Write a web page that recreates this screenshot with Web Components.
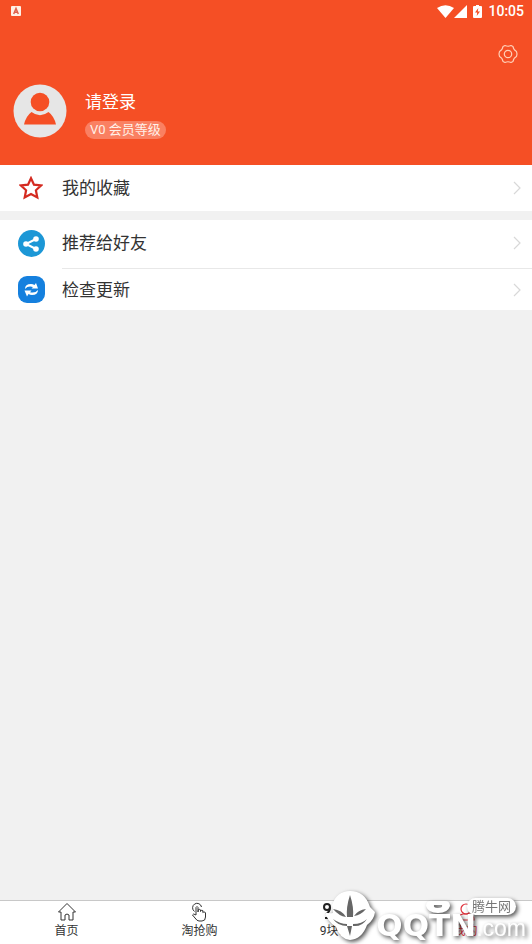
<!DOCTYPE html>
<html lang="zh-CN">
<head>
<meta charset="utf-8">
<meta name="viewport" content="width=device-width, initial-scale=1">
<title>我的</title>
<style>
  html, body { margin: 0; height: 100%; }
  body { font-family: Roboto, "Noto Sans CJK SC", sans-serif; color: #333; background: #f1f1f1; }
</style>
</head>
<body>
<mine-page></mine-page>

<script>

class StatusBar extends HTMLElement {
    constructor() {
        super();
        this.attachShadow({mode:"open"});
        this.shadowRoot.innerHTML = `<style>
            :host { display: flex; align-items: center; height: 22px; padding: 0 8px 0 11px; color: #fff; }
            svg { display: block; }
            .right { margin-left: auto; display: flex; align-items: center; }
            .battery { margin: 0 6px 0 6px; }
            time { font-size: 14px; line-height: 22px; font-weight: 500; }
        </style>
        <svg width="10" height="10" viewBox="0 0 10 10"><rect width="10" height="10" rx="1" fill="#fff0e6"/><path d="M2.7 8 5 2.5 7.3 8M3.5 6.3h3" fill="none" stroke="#e0604a" stroke-width="1.5"/></svg>
        <div class="right">
            <svg width="17" height="13" viewBox="0 0 17 13"><path d="M0 3Q8.500-2.500 17 3L8.500 13z" fill="#fff"/></svg>
            <svg width="13" height="13" viewBox="0 0 13 13"><path d="M13 0v13H0z" fill="#fff"/></svg>
            <svg class="battery" width="9" height="13" viewBox="0 0 9 13"><path d="M3 0h3v1h2q1 0 1 1v10q0 1-1 1H1q-1 0-1-1V2q0-1 1-1h2z" fill="#fff"/><path d="M5.300 3 2 7.500h2.200L3.700 11 7 6.500H4.800z" fill="#f54f25"/></svg>
            <time>10:05</time>
        </div>`;
    }
}
customElements.define("status-bar", StatusBar);


class ProfileHeader extends HTMLElement {
    constructor() {
        super();
        this.attachShadow({mode:"open"});
        this.shadowRoot.innerHTML = `<style>
            :host { display: block; background: #f54f25; color: #fff; padding-bottom: 26px; }
            .tools { display: flex; justify-content: flex-end; padding: 22px 14px 0; }
            button { border: 0; padding: 0; background: none; color: inherit; font: inherit; text-align: left; cursor: pointer; }
            svg { display: block; }
            .user { display: flex; align-items: center; gap: 18px; margin: 19px 0 0 13px; }
            .info { display: flex; flex-direction: column; align-items: flex-start; gap: 8px; padding-top: 8px; }
            .login { font-size: 17px; line-height: 22px; }
            .level { font-size: 13px; line-height: 18px; padding: 0 5px; border-radius: 9px; background: #fa8062; color: #fff0e8; }
        </style>
        <status-bar></status-bar>
        <div class="tools">
            <button aria-label="设置">
                <svg width="20" height="20" viewBox="0 0 20 20" fill="none" stroke="#ffd0b8" stroke-width="1.2" stroke-linejoin="round"><path d="M7 1.500Q10 3 13 1.500L15 2.500Q15.500 6 18.500 7.500L19 10L18.500 12.500Q15.500 14 15 17.500L13 18.500Q10 17 7 18.500L5 17.500Q4.500 14 1.500 12.500L1 10L1.500 7.500Q4.500 6 5 2.500z"/><circle cx="10" cy="10" r="3.700"/></svg>
            </button>
        </div>
        <div class="user">
            <svg width="54" height="54" viewBox="0 0 54 54"><circle cx="27" cy="27" r="26.500" fill="#e6e6e6"/><circle cx="27" cy="18" r="9.300" fill="#f54f25"/><path d="M11 40.500Q13 32 18.500 28Q27 34.500 35.500 28Q41 32 43 40.500z" fill="#f54f25"/></svg>
            <div class="info">
                <button class="login">请登录</button>
                <span class="level">V0 会员等级</span>
            </div>
        </div>`;
    }
}
customElements.define("profile-header", ProfileHeader);


// white block of rows
class MenuGroup extends HTMLElement {
    constructor() {
        super();
        this.attachShadow({mode:"open"});
        this.shadowRoot.innerHTML = `<style>
            :host { display: block; background: #fff; margin-bottom: 9px; }
            ::slotted(menu-row:not(:first-child)) { --line: #e8e8e8; --row: 41px; --space: 3px; }
        </style>
        <slot></slot>`;
    }
}
customElements.define("menu-group", MenuGroup);


class MenuRow extends HTMLElement {
    constructor() {
        super();
        this.attachShadow({mode:"open"});
        this.shadowRoot.innerHTML = `<style>
            :host { display: block; padding-top: var(--space, 0); }
            a { display: grid; grid-template-columns: 62px 1fr; align-items: center; color: inherit; text-decoration: none; }
            .icon { display: grid; place-items: center; }
            .text { display: flex; align-items: center; justify-content: space-between; min-height: var(--row, 46px); padding-right: 11px; border-top: 1px solid var(--line, transparent); margin-top: -1px; font-size: 17px; line-height: 24px; }
        </style>
        <a href="#">
            <span class="icon"><slot name="icon"></slot></span>
            <span class="text"><slot></slot>
                <svg width="8" height="14" viewBox="0 0 8 14"><path d="M1 1l6 6-6 6" fill="none" stroke="#d8d8d8" stroke-width="1.2"/></svg>
            </span>
        </a>`;
    }
}
customElements.define("menu-row", MenuRow);


class TabItem extends HTMLElement {
    constructor() {
        super();
        this.attachShadow({mode:"open"});
        this.shadowRoot.innerHTML = `<style>
            :host { display: block; flex: 1; }
            :host([active]) { color: #e0303a; }
            a { display: flex; flex-direction: column; align-items: center; color: inherit; text-decoration: none; font-size: 12px; line-height: 16px; padding: 1px 0 5px; gap: 1px; }
        </style>
        <a href="#"><slot name="icon"></slot><span><slot></slot></span></a>`;
    }
}
customElements.define("tab-item", TabItem);


// floating logo over the tab bar
class SiteMark extends HTMLElement {
    constructor() {
        super();
        this.attachShadow({mode:"open"});
        this.shadowRoot.innerHTML = `<style>
            :host { position: absolute; right: 6px; bottom: 0; display: flex; align-items: flex-end; color: #fff; pointer-events: none; filter: drop-shadow(2px 2px 2px #000a); }
            svg { display: block; }
            .words { display: flex; align-items: baseline; line-height: 32px; }
            .name { font-family: "DejaVu Sans", sans-serif; font-weight: bold; font-size: 31px; }
            .com { font-family: "Liberation Sans", sans-serif; font-size: 23px; }
            .horns { position: absolute; right: 76px; bottom: 31px; }
            .cn { position: absolute; right: 10px; bottom: 29px; padding: 0 5px; border-radius: 9px; background: #fff; color: #777; font-size: 13px; line-height: 17px; white-space: nowrap; }
        </style>
        <svg width="52" height="56" viewBox="0 0 52 56">
            <path d="M8 17Q13 3 26 3Q41 3 46 19L51 24Q50 32 43 37Q38 51 26 52Q16 51 12 39Q3 33 1 24Q5 26 9 25z" fill="#fff"/>
            <path d="M26 7Q22 19 23 29H29Q30 19 26 7zM9 21Q15 28 22 29Q18 22 9 21zM42 21Q34 22 30 28Q37 27 42 21zM9 31Q16 36 23 36V38Q14 38 9 31zM29 36Q38 36 43 31Q38 39 29 38zM23 38H28L26 48z" fill="#666"/>
        </svg>
        <span class="words"><span class="name">QQTN</span><span class="com">.com</span></span>
        <svg class="horns" width="24" height="12" viewBox="0 0 24 12"><path d="M5 0H19Q24 0 24 5Q22 12 12 12Q2 12 0 5Q0 0 5 0zM8 4Q7 7 12 7Q17 7 16 4z" fill="#fff" fill-rule="evenodd"/></svg>
        <span class="cn">腾牛网</span>`;
    }
}
customElements.define("site-mark", SiteMark);


class MinePage extends HTMLElement {
    constructor() {
        super();
        this.attachShadow({mode:"open"});
        this.shadowRoot.innerHTML = `<style>
            :host { display: flex; flex-direction: column; min-height: 100vh; position: relative; overflow: hidden; }
            main { flex: 1; }
            nav { display: flex; background: #fff; border-top: 1px solid #c8c8c8; }
            svg { display: block; }
        </style>
        <profile-header></profile-header>
        <main>
            <menu-group>
                <menu-row>
                    <svg slot="icon" width="24" height="24" viewBox="0 0 24 24"><path d="M12 2.200 15 8.700 22 9.500 16.900 14.300 18.300 21.500 12 18 5.700 21.500 7.100 14.300 2 9.500 9 8.700z" fill="none" stroke="#d42a20" stroke-width="2.200"/></svg>
                    我的收藏
                </menu-row>
            </menu-group>
            <menu-group>
                <menu-row>
                    <svg slot="icon" width="27" height="27" viewBox="0 0 27 27"><circle cx="13.500" cy="13.500" r="13.500" fill="#1c97d6"/><path d="M18 9 8 14l10 5" fill="none" stroke="#fff" stroke-width="2"/><g fill="#fff"><circle cx="18" cy="9" r="2.800"/><circle cx="8" cy="14" r="2.800"/><circle cx="18" cy="19" r="2.800"/></g></svg>
                    推荐给好友
                </menu-row>
                <menu-row>
                    <svg slot="icon" width="27" height="27" viewBox="0 0 27 27"><rect width="27" height="27" rx="9" fill="#1580de"/><path d="M7 13Q7 8 13 8Q15 8 16.500 9L18 7L20 12.500L13.500 12.500L15 11Q10 9.500 7 13zM20 14Q20 19 14 19Q12 19 10.500 18L9 20.500L6.500 14.500L13.500 14.500L12 16.200Q17 17.500 20 14z" fill="#fff"/></svg>
                    检查更新
                </menu-row>
            </menu-group>
        </main>
        <nav>
            <tab-item>
                <svg slot="icon" width="20" height="20" viewBox="0 0 20 20"><path d="M1.500 10 10 1.500 18.500 10H16v8h-4v-5q-2-2-4 0v5H4v-8z" fill="none" stroke="#333"/></svg>
                首页
            </tab-item>
            <tab-item>
                <svg slot="icon" width="20" height="20" viewBox="0 0 20 20" fill="none" stroke="#333"><path d="M4.500 9.500A4.500 4.500 0 1 1 11.500 5"/><path d="M6 13V5.500q1-2 2 0V10l.5-2.500q1.500-.8 2 .5v1.500q.5-2 2.300-1v2q1-1.500 2.700.2V15q0 4-3.500 4H9q-2 0-4-3l-2.500-3q.5-2 3.500 0"/></svg>
                淘抢购
            </tab-item>
            <tab-item>
                <svg slot="icon" width="20" height="20" viewBox="0 0 20 20" fill="none" stroke="#222" stroke-width="2"><circle cx="4" cy="5" r="3"/><path d="M7 5q0 5-4 7"/><circle cx="15" cy="5" r="3"/><path d="M18 5q0 5-4 7M2 16h16"/></svg>
                9块9
            </tab-item>
            <tab-item active>
                <svg slot="icon" width="20" height="20" viewBox="0 0 20 20" fill="none" stroke="#e0303a" stroke-width="1.200"><circle cx="10" cy="7" r="5"/><path d="M2 18q0-5 5-6h6q5 1 5 6z"/></svg>
                我的
            </tab-item>
        </nav>
        <site-mark></site-mark>`;
    }
}
customElements.define("mine-page", MinePage);

</script>
</body>
</html>
